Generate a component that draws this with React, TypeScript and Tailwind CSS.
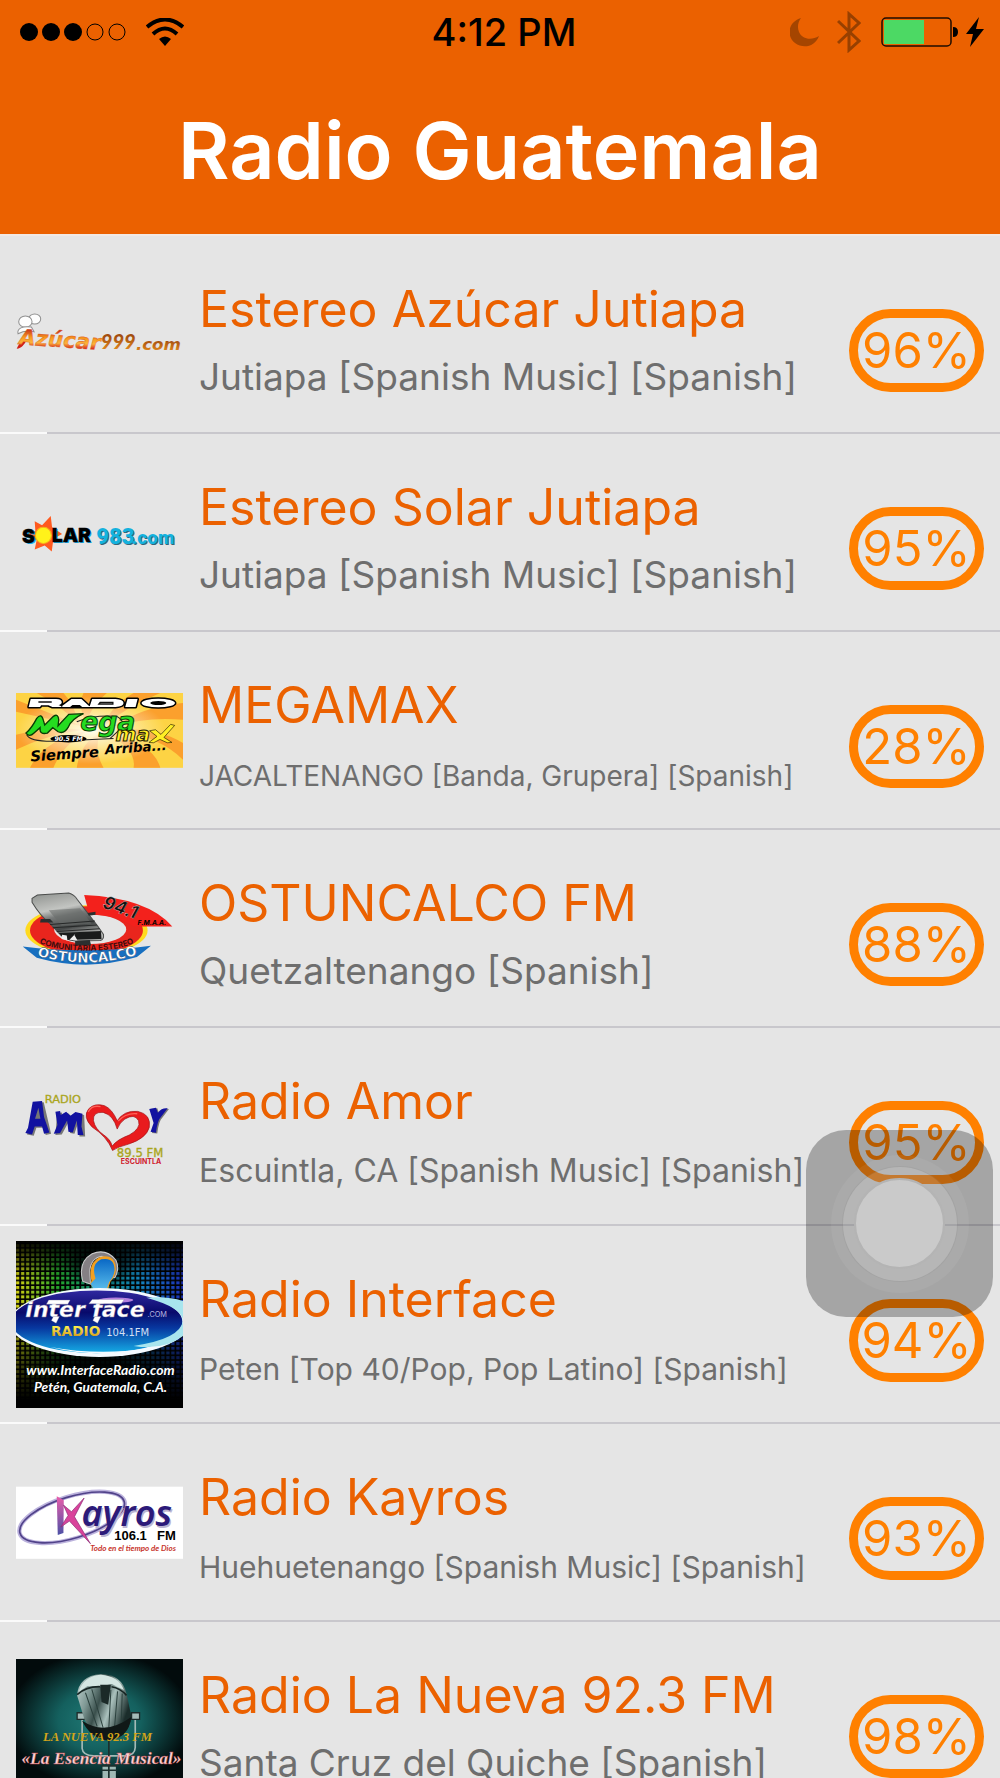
import type { ReactNode } from "react";

const Logo = ({ label, viewBox, children }: { label: string; viewBox: string; children: ReactNode }) => (
  <svg viewBox={viewBox} className="w-full h-auto block overflow-visible" role="img" aria-label={label}>
    {children}
  </svg>
);

const AzucarLogo = () => (
  <Logo label="Azúcar 999" viewBox="48 65 500 130">
    <defs>
      <linearGradient id="azucar" x1="0" x2="0.15" y1="0" y2="1">
        <stop offset="0.2" stopColor="#c9331c" />
        <stop offset="0.5" stopColor="#f79a1e" />
        <stop offset="0.7" stopColor="#fbb43c" />
        <stop offset="0.9" stopColor="#d8251c" />
      </linearGradient>
      <linearGradient id="azucarCom" x1="0" x2="0" y1="0" y2="1">
        <stop offset="0.3" stopColor="#a34e10" />
        <stop offset="1" stopColor="#f0951d" />
      </linearGradient>
    </defs>
    <g fill="#fdfdfd" stroke="#8f8f8f" strokeWidth="3">
      <ellipse cx="104" cy="86" rx="18" ry="15" />
      <ellipse cx="76" cy="94" rx="20" ry="17" />
      <path d="M54 130c-4-16 14-24 40-20l8 14c-20-4-34-2-48 6z" />
    </g>
    <path d="M50 175c4-10 12-20 18-30l10 8c-6 8-12 20-28 22z" fill="#cf2018" />
    <text
      x="56"
      y="162"
      fontFamily="'DejaVu Sans', sans-serif"
      fontStyle="italic"
      fontWeight="700"
      fontSize="64"
      fill="url(#azucar)"
      stroke="#d9541c"
      strokeWidth="1"
      transform="rotate(4 60 160)"
    >
      Azúcar
    </text>
    <g fontStyle="italic" fill="url(#azucarCom)">
      <text x="302" y="176" fontFamily="Lato, sans-serif" fontWeight="900" fontSize="60">999</text>
      <text x="407" y="178" fontFamily="'DejaVu Sans', sans-serif" fontWeight="700" fontSize="50">.com</text>
    </g>
  </Logo>
);

const SolarLogo = () => (
  <Logo label="Solar 983" viewBox="48 64 500 120">
    <path
      d="M152 76L156 110L186 130L160 144L155 182L134 164L104 176L110 148L66 132L106 122L104 92L126 104Z"
      fill="#ff5a1f"
    />
    <g fontFamily="Inter, sans-serif" fontWeight="900" fontSize="58">
      <text x="70" y="161" fill="#1bb4f0">S</text>
      <text x="158" y="157" fill="#1bb4f0">LAR</text>
      <text x="66" y="158" fill="#000" stroke="#000">S</text>
      <text x="155" y="153" fill="#000" stroke="#000">LAR</text>
    </g>
    <circle cx="130" cy="134" r="24" fill="#fff21a" stroke="#f6b21a" strokeWidth="3" />
    <g fontFamily="Roboto, sans-serif" fontWeight="900">
      <text x="291" y="164" fill="#37657a" fontSize="66">983</text>
      <text x="288" y="161" fill="#14b2de" fontSize="66">983</text>
      <text x="397" y="164" fill="#37657a" fontSize="57">.com</text>
      <text x="394" y="161" fill="#14b2de" fontSize="57">.com</text>
    </g>
  </Logo>
);

const MegamaxLogo = () => (
  <Logo label="Radio Megamax" viewBox="48 40 500 224">
    <defs>
      <radialGradient id="mega" cx="0.45" cy="0.5" r="0.45">
        <stop offset="0" stopColor="#fffdf0" />
        <stop offset="1" stopColor="#fffdf0" stopOpacity="0" />
      </radialGradient>
    </defs>
    <rect x="48" y="40" width="500" height="224" fill="#fdd344" />
    <g fill="#fba02d">
      <path d="M48 60L250 140L48 96ZM48 165Q150 140 250 150Q140 165 48 210ZM90 264Q130 180 270 150Q190 190 160 264ZM230 264Q240 190 300 160Q280 210 310 264Z" />
      <path d="M400 264Q410 210 320 160Q460 190 480 264ZM548 240Q480 170 340 150Q470 140 548 190ZM340 140Q440 110 548 120L548 70Q430 80 340 140ZM310 140Q330 80 400 40L480 40Q380 80 310 140ZM260 130Q230 80 250 40L320 40Q270 80 260 130ZM240 140Q200 90 110 40L190 40Q220 70 240 140Z" />
    </g>
    <rect x="48" y="40" width="500" height="224" fill="url(#mega)" />
    <g fill="#000" stroke="#000" strokeWidth="9" strokeLinejoin="round">
      <path d="M92 58h76q17 0 17 10q0 7-10 8l14 6h-32l-12-5h-22l-3 5H86z M182 82l32-24h30l26 24z M276 58h70q24 2 24 12t-24 12h-78z M382 58h30l-6 24h-31z" />
      <ellipse cx="474" cy="70" rx="50" ry="13" />
    </g>
    <g fill="#fff" fillRule="evenodd">
      <path d="M92 58h76q17 0 17 10q0 7-10 8l14 6h-32l-12-5h-22l-3 5H86z M182 82l32-24h30l26 24h-24l-7-6h-22l-7 6z M276 58h70q24 2 24 12t-24 12h-78z M382 58h30l-6 24h-31z" />
      <path d="M424 70a50 13 0 1 0 100 0a50 13 0 1 0-100 0zM450 70a24 6 0 1 1 48 0a24 6 0 1 1-48 0z" />
    </g>
    <path d="M115 67h40M300 68h38v5h-42z" stroke="#111" strokeWidth="4" fill="none" />
    <path d="M230 126Q280 105 350 110Q380 128 360 148L330 176M80 165Q90 188 180 184L340 176" stroke="#222" strokeWidth="3" fill="none" />
    <path
      d="M78 160Q96 144 110 116Q124 98 130 122L134 136L160 110Q174 100 176 120L174 138L206 104L250 102Q214 118 204 143Q192 164 174 156L158 144L142 160Q118 166 120 144L102 160Q88 174 78 160Z"
      fill="#25dc20" stroke="#073c05" strokeWidth="4"
    />
    <ellipse cx="205" cy="177" rx="54" ry="11" fill="#000" />
    <g fontFamily="'DejaVu Sans', sans-serif" fontStyle="italic" fontWeight="700">
      <text x="240" y="155" fontSize="80" fill="#25dc20" stroke="#073c05" strokeWidth="3">ega</text>
      <text x="163" y="184" fontSize="19" fill="#fff">90.5 FM</text>
      <text x="346" y="184" fontSize="60" fill="#ffef25" stroke="#252100" strokeWidth="3">ma</text>
      <path d="M448 153l18-3 16 14 29-30 12 3-32 36 24 15-14 1-22-10-19 10-14-1 24-18z" fill="#ffef25" stroke="#252100" strokeWidth="2" />
      <g transform="rotate(-4 95 245)" fill="#000">
        <text x="92" y="245" fontSize="44">Siempre</text>
        <text x="316" y="239" fontSize="40">Arriba...</text>
      </g>
    </g>
  </Logo>
);

const OstuncalcoLogo = () => (
  <Logo label="Ostuncalco 94.1" viewBox="48 34 500 220">
    <defs>
      <linearGradient id="micBody" x1="0" x2="0.3" y1="0" y2="1">
        <stop offset="0" stopColor="#8d908d" />
        <stop offset="0.4" stopColor="#c3c5c2" />
        <stop offset="0.55" stopColor="#777a79" />
        <stop offset="0.8" stopColor="#444747" />
        <stop offset="1" stopColor="#b4b6b4" />
      </linearGradient>
      <path id="ostuArc" d="M84 220Q260 278 438 216" />
      <path id="radioArc" d="M95 172Q130 212 260 213Q390 212 424 172" />
    </defs>
    <ellipse cx="259" cy="152" rx="183" ry="75" fill="#ffda1f" />
    <ellipse cx="259" cy="152" rx="169" ry="72" fill="#e9251d" />
    <ellipse cx="270" cy="149" rx="108" ry="44" fill="#e5e5e5" />
    <path d="M252 46Q440 54 516 140L400 140Q350 104 268 104Z" fill="#f3211c" />
    <path d="M68 200Q260 224 452 198L410 232Q260 276 110 234Z" fill="#176fc0" />
    <path d="M96 56L112 46L206 40Q222 44 232 60L292 138L310 164Q312 180 300 182L226 184Q190 180 176 160L150 132Q120 108 96 68Z" fill="url(#micBody)" stroke="#4a4c4b" strokeWidth="3" />
    <path d="M146 92L240 86L274 132L184 138Z" fill="#686b6a" opacity="0.55" />
    <path d="M150 134L284 124M158 144L290 136M170 155L298 147" stroke="#262828" strokeWidth="3" />
    <path d="M176 160L302 154L304 178L196 181Z" fill="#191b1b" />
    <path d="M186 165l-2 13 18 4-2-15zM226 162l-18 18 24 2-10-18z" fill="#eee" />
    <path d="M225 184l44-3 4 16h-48zM122 118l28 0 10 10h-40zM262 100l24-4v9l-20 3z" fill="#2c2f2f" />
    <g fontWeight="700">
      <text fontFamily="Inter, sans-serif" fontSize="24" fill="#3e0d0d" textAnchor="middle">
        <textPath href="#radioArc" startOffset="50%">COMUNITARIA ESTEREO</textPath>
      </text>
      <text fontFamily="'DejaVu Sans', sans-serif" fontSize="40" fill="#fff" stroke="#153052" strokeWidth="1" textAnchor="middle">
        <textPath href="#ostuArc" startOffset="50%">OSTUNCALCO</textPath>
      </text>
      <g transform="rotate(19 300 82)" fontFamily="Inter, sans-serif" fontStyle="italic" fill="#111" stroke="#ddd" strokeWidth="1">
        <text x="305" y="82" fontSize="54">94.1</text>
      </g>
      <text x="412" y="137" fontFamily="Inter, sans-serif" fontSize="20" fontStyle="italic">F.M.A.A.</text>
    </g>
  </Logo>
);

const AmorLogo = () => (
  <Logo label="Radio Amor" viewBox="48 53 500 230">
    <text x="134" y="97" fontFamily="'DejaVu Sans', sans-serif" fontSize="34" fill="#aaa51d" stroke="#aaa51d" strokeWidth="1">RADIO</text>
    <g fill="#777" transform="translate(5 4)">
      <path d="M76 188L98 94L126 92L148 186L132 190L126 168L104 168L96 192ZM161 190L166 124L180 122L182 134L198 124L211 136L226 125L247 130L250 194L233 194L230 150L218 186L205 184L201 150L180 188Z" />
    </g>
    <path fillRule="evenodd" d="M76 188L84 172L98 94L126 92L132 140L148 186L132 190L126 168L104 168L96 192ZM105 145L121 145L115 112ZM161 190L172 164L166 124L180 122L182 134L198 124L211 136L226 125L247 130L244 168L250 194L233 194L230 150L218 186L205 184L201 150L180 188Z" fill="#1212a0" />
    <path d="M455 188L464 160L451 116L471 114L477 130Q488 112 506 116L486 142Q476 150 471 189Z" fill="#777" />
    <path d="M451 184L460 158L447 116L467 112L473 127Q484 112 502 114L482 140Q472 148 467 187Z" fill="#1212a0" />
    <path fillRule="evenodd" d="M337 240Q320 198 276 170Q246 139 266 115Q284 97 313 106Q336 116 351 151Q372 119 413 123Q453 132 447 171Q438 204 385 221Q353 229 337 240ZM336 227Q351 207 387 194Q423 174 415 151Q403 128 374 146Q358 157 351 176Q340 134 309 126Q277 124 280 151Q285 176 310 193Q331 207 336 227Z" fill="#e91b1d" stroke="#a00e12" strokeWidth="2" />
    <path d="M264 125Q275 103 301 109M354 152Q376 127 411 130" stroke="#ff6258" strokeWidth="4" fill="none" />
    <text x="350" y="261" fontFamily="'DejaVu Sans', sans-serif" fontSize="35" fill="#aaa51d" stroke="#aaa51d" strokeWidth="1">89.5 FM</text>
    <text x="362" y="281" fontFamily="Inter, sans-serif" fontSize="21" fontWeight="700" fill="#d0202c">ESCUINTLA</text>
  </Logo>
);

const InterfaceLogo = () => (
  <Logo label="Interface Radio" viewBox="48 36 500 500">
    <defs>
      <linearGradient id="eqColors" x1="0" x2="1" y1="0" y2="0">
        <stop offset="0" stopColor="#e8e414" />
        <stop offset="0.25" stopColor="#28b630" />
        <stop offset="0.5" stopColor="#0b8f83" />
        <stop offset="0.75" stopColor="#158fd2" />
        <stop offset="1" stopColor="#1d35c9" />
      </linearGradient>
      <linearGradient id="eqFade" x1="0" x2="0" y1="0" y2="1">
        <stop offset="0" stopColor="#000" />
        <stop offset="0.22" stopColor="#000" stopOpacity="0.1" />
        <stop offset="0.4" stopColor="#000" stopOpacity="0.1" />
        <stop offset="0.7" stopColor="#000" stopOpacity="0.6" />
        <stop offset="0.95" stopColor="#000" />
      </linearGradient>
      <radialGradient id="eqCenter" cx="0.5" cy="0.5" r="0.5">
        <stop offset="0.3" stopColor="#000" stopOpacity="0.85" />
        <stop offset="1" stopColor="#000" stopOpacity="0" />
      </radialGradient>
      <pattern id="eqGrid" width="15" height="14" patternUnits="userSpaceOnUse">
        <path d="M0 0h15v14H0zM3 3v9h10V3z" fillRule="evenodd" fill="#000" />
      </pattern>
      <linearGradient id="oval" x1="0" x2="0" y1="0" y2="1">
        <stop offset="0" stopColor="#30289f" />
        <stop offset="0.35" stopColor="#080a6b" />
        <stop offset="0.6" stopColor="#0738a0" />
        <stop offset="1" stopColor="#15aee6" />
      </linearGradient>
      <linearGradient id="face" x1="0" x2="0" y1="0" y2="1">
        <stop offset="0" stopColor="#0968c5" />
        <stop offset="1" stopColor="#5fc3ee" />
      </linearGradient>
      <linearGradient id="gold" x1="0" x2="0" y1="0" y2="1">
        <stop offset="0.2" stopColor="#fff04e" />
        <stop offset="1" stopColor="#c98612" />
      </linearGradient>
      <clipPath id="interfaceClip"><rect x="48" y="36" width="500" height="500" /></clipPath>
    </defs>
    <g clipPath="url(#interfaceClip)">
      <rect x="48" y="36" width="500" height="500" fill="url(#eqColors)" />
      <rect x="48" y="36" width="500" height="500" fill="url(#eqGrid)" />
      <rect x="48" y="36" width="500" height="500" fill="url(#eqFade)" />
      <ellipse cx="298" cy="430" rx="260" ry="140" fill="url(#eqCenter)" />
      <ellipse cx="298" cy="95" rx="110" ry="80" fill="url(#eqCenter)" />
      <path d="M248 157Q232 99 276 74Q318 57 347 93Q359 119 344 146L329 142Q346 95 306 82Q272 87 269 126L271 165Z" fill="#858084" stroke="#ccc" strokeWidth="3" />
      <path d="M274 156Q262 101 299 84Q346 73 347 122Q345 144 331 157L322 184Q303 197 282 181L270 164Z" fill="#f2a020" />
      <path d="M286 148Q272 105 303 91Q344 83 343 125Q340 145 327 159L318 184Q302 195 281 181L271 164Z" fill="url(#face)" />
      <ellipse cx="298" cy="280" rx="268" ry="103" fill="#f4faff" />
      <ellipse cx="290" cy="278" rx="256" ry="94" fill="url(#oval)" />
      <path d="M438 206Q546 235 548 275Q540 330 400 350Q500 366 560 310V220Q510 200 438 206Z" fill="#a8e5ee" />
      <path d="M150 353Q300 390 440 357Q300 380 150 353Z" fill="#f4faff" />
      <ellipse cx="347" cy="213" rx="52" ry="8" fill="#db9cf4" opacity="0.8" />
      <g fontFamily="'DejaVu Sans', sans-serif" fontStyle="italic" fontWeight="700" fill="#fff" stroke="#86839e" strokeWidth="1">
        <text x="76" y="265" fontSize="66">inter</text>
        <text x="276" y="265" fontSize="66">face</text>
        <path d="M146 213h64l-7 12h-64zM276 211h96l-9 13h-97zM160 262l18 0-10 20-14-8zM284 262l18 0-10 20-14-8z" />
      </g>
      <text x="442" y="264" fontFamily="Inter, sans-serif" fontSize="22" fill="#b5b7e0">.COM</text>
      <text x="153" y="321" fontFamily="'DejaVu Sans', sans-serif" fontSize="41" fontWeight="700" fill="url(#gold)">RADIO</text>
      <text x="318" y="320" fontFamily="'DejaVu Sans', sans-serif" fontSize="30" fill="#d3e0f4">104.1FM</text>
      <g fontFamily="Lato, sans-serif" fontStyle="italic" fontWeight="700" fill="#fff">
        <text x="301" y="438" fontSize="42" textAnchor="middle">www.InterfaceRadio.com</text>
        <text x="301" y="488" fontSize="41" textAnchor="middle">Petén, Guatemala, C.A.</text>
      </g>
    </g>
  </Logo>
);

const KayrosLogo = () => (
  <Logo label="Kayros 106.1 FM" viewBox="48 48 500 216">
    <defs>
      <linearGradient id="kayrosK" x1="0" x2="0" y1="0" y2="1">
        <stop offset="0" stopColor="#e95daa" />
        <stop offset="1" stopColor="#4c51a6" />
      </linearGradient>
    </defs>
    <rect x="48" y="50" width="500" height="216" fill="#fff" />
    <g fill="none" transform="rotate(-17 216 142)">
      <ellipse cx="216" cy="142" rx="164" ry="63" stroke="#bcb3dd" strokeWidth="13" />
      <ellipse cx="216" cy="142" rx="163" ry="62" stroke="#51438a" strokeWidth="5" />
    </g>
    <g fontFamily="'Noto Sans', sans-serif" fontStyle="italic" fontWeight="600" fontSize="108">
      <text x="248" y="174" fill="#bbb4d1">ayros</text>
      <text x="244" y="169" fill="#2c1a79">ayros</text>
    </g>
    <path d="M170 79L191 91L190 189L173 195Z" fill="url(#kayrosK)" />
    <path d="M252 84L223 140L271 221L208 153L182 171L204 136L190 105L214 125Z" fill="#d9439b" stroke="#8b2a76" strokeWidth="2" />
    <g fontFamily="'Liberation Sans', sans-serif" fontWeight="700" fontSize="39" fill="#000">
      <text x="342" y="211">106.1</text>
      <text x="470" y="211">FM</text>
    </g>
    <text x="270" y="244" fontFamily="Lato, sans-serif" fontStyle="italic" fontWeight="700" fontSize="24" fill="#c8382f">Todo en el tiempo de Dios</text>
  </Logo>
);

const NuevaLogo = () => (
  <Logo label="La Nueva 92.3 FM" viewBox="48 57 500 366">
    <defs>
      <radialGradient id="teal" cx="0.5" cy="0.5" r="0.55">
        <stop offset="0" stopColor="#217c78" />
        <stop offset="0.45" stopColor="#14605e" />
        <stop offset="1" stopColor="#020b0c" />
      </radialGradient>
      <linearGradient id="chrome" x1="0" x2="1" y1="0" y2="0.4">
        <stop offset="0" stopColor="#c8dad8" />
        <stop offset="0.3" stopColor="#7f9894" />
        <stop offset="0.5" stopColor="#3a4f4c" />
        <stop offset="0.7" stopColor="#a9c0bc" />
        <stop offset="1" stopColor="#1b2d2b" />
      </linearGradient>
    </defs>
    <rect x="48" y="57" width="500" height="366" fill="url(#teal)" />
    <path d="M246 226V325Q248 346 280 347H375Q404 346 405 322V226" stroke="#a3bab7" strokeWidth="5" fill="none" />
    <path d="M231 218h24v20h-24zM394 218h24v20h-24z" fill="#a5bbb8" stroke="#1c2c2b" strokeWidth="4" />
    <path d="M307 377h40v46h-40z" fill="#9eb9b5" />
    <path d="M326 300v123M304 377h46M304 390h46" stroke="#1c302e" strokeWidth="5" />
    <path d="M231 166Q235 108 302 102Q366 104 379 161L394 231Q388 281 330 289Q273 288 252 235Z" fill="url(#chrome)" />
    <path d="M236 155Q250 108 302 104Q356 108 371 150L335 132L298 140L262 138Z" fill="#d4e6e2" />
    <path d="M300 134h32l-8 60-20-8z" fill="#1b2a28" />
    <path d="M231 164Q258 139 300 140M334 140Q360 144 379 166" stroke="#172624" strokeWidth="5" fill="none" />
    <path d="M256 158L291 259M275 148L309 263M332 150L326 262M352 154L343 263M366 160L363 253" stroke="#2b403d" strokeWidth="3" fill="none" />
    <path d="M246 242Q315 288 393 231Q386 296 323 301Q270 294 246 242Z" fill="#101817" />
    <text x="292" y="303" textAnchor="middle" fontFamily="'Liberation Serif', serif" fontStyle="italic" fontSize="38" fontWeight="700" fill="#d4a51a">LA NUEVA 92.3 FM</text>
    <text x="304" y="370" textAnchor="middle" fontFamily="'Liberation Serif', serif" fontStyle="italic" fontSize="52" fontWeight="700" fill="#f9d5d5" stroke="#c23b45" strokeWidth="1">«La Esencia Musical»</text>
  </Logo>
);

// size is the subtitle size, long subtitles shrink to stay on one line
const stations = [
  { name: "Estereo Azúcar Jutiapa", info: "Jutiapa [Spanish Music] [Spanish]", size: "text-[37px]", score: 96, logo: <AzucarLogo /> },
  { name: "Estereo Solar Jutiapa", info: "Jutiapa [Spanish Music] [Spanish]", size: "text-[37px]", score: 95, logo: <SolarLogo /> },
  { name: "MEGAMAX", info: "JACALTENANGO [Banda, Grupera] [Spanish]", size: "text-[28px]", score: 28, logo: <MegamaxLogo /> },
  { name: "OSTUNCALCO FM", info: "Quetzaltenango [Spanish]", size: "text-[37px]", score: 88, logo: <OstuncalcoLogo /> },
  { name: "Radio Amor", info: "Escuintla, CA [Spanish Music] [Spanish]", size: "text-[32px]", score: 95, logo: <AmorLogo /> },
  { name: "Radio Interface", info: "Peten [Top 40/Pop, Pop Latino] [Spanish]", size: "text-[30px]", score: 94, logo: <InterfaceLogo /> },
  { name: "Radio Kayros", info: "Huehuetenango [Spanish Music] [Spanish]", size: "text-[30px]", score: 93, logo: <KayrosLogo /> },
  { name: "Radio La Nueva 92.3 FM", info: "Santa Cruz del Quiche [Spanish]", size: "text-[37px]", score: 98, logo: <NuevaLogo /> },
];

function StatusBar() {
  return (
    <div className="grid grid-cols-[1fr_auto_1fr] items-center h-16 pl-5 pr-4 text-black">
      <div className="flex items-center">
        <svg viewBox="0 0 106 20" className="w-[106px] h-5" role="img" aria-label="Signal 3 of 5">
          <circle cx="9" cy="10" r="9" />
          <circle cx="31" cy="10" r="9" />
          <circle cx="53" cy="10" r="9" />
          <circle cx="75" cy="10" r="8" fill="none" stroke="#000" />
          <circle cx="97" cy="10" r="8" fill="none" stroke="#000" />
        </svg>
        <svg viewBox="0 0 38 28" className="w-[38px] h-7 ml-5" role="img" aria-label="Wi-Fi">
          <path d="M1 9Q19 -6 37 9" fill="none" stroke="#000" strokeWidth="4" />
          <path d="M7 16Q19 5 31 16" fill="none" stroke="#000" strokeWidth="4" />
          <path d="M13 21Q19 16 25 21L19 28Z" />
        </svg>
      </div>
      <span className="pl-1 text-[38px] leading-10 font-medium">4:12 PM</span>
      <div className="flex items-center justify-end">
        <svg viewBox="0 0 29 29" className="w-[29px] h-[29px]" role="img" aria-label="Do not disturb">
          <path d="M11 0C-2 4 -4 18 5 25C13 31 25 29 29 18C21 23 12 21 9 14C7 9 8 4 11 0Z" fill="#a54500" />
        </svg>
        <svg viewBox="0 0 24 42" className="w-6 h-[42px] ml-[18px]" role="img" aria-label="Bluetooth">
          <path d="M1 10L22 30L12 39V3L22 12L1 32" fill="none" stroke="#984000" strokeWidth="3" />
        </svg>
        <svg viewBox="0 0 78 30" className="w-[78px] h-[30px] ml-5" role="img" aria-label="Battery">
          <rect x="1" y="1" width="69" height="28" rx="4" fill="none" stroke="#1f0c00" strokeWidth="1.5" />
          <rect x="3" y="3" width="40" height="24" fill="#4cd964" />
          <path d="M72 10Q77 10 77 15T72 20Z" />
        </svg>
        <svg viewBox="0 0 18 30" className="w-[18px] h-[30px] ml-[7px]" role="img" aria-label="Charging">
          <path d="M13 0L0 17H7L4 30L18 12H10Z" />
        </svg>
      </div>
    </div>
  );
}

export default function App() {
  return (
    <div className="relative h-screen flex flex-col overflow-hidden bg-[#e5e5e5] font-[Inter,sans-serif]">
      <header className="shrink-0 bg-[#eb6100] border-b-2 border-[#f1e9e4]">
        <StatusBar />
        <h1 className="h-[170px] pt-9 text-center text-[79px] leading-[100px] font-semibold text-white whitespace-nowrap">
          Radio Guatemala
        </h1>
      </header>

      <main className="flex-1 min-h-0 overflow-hidden">
        <ul>
          {stations.map((station) => (
            <li key={station.name}>
              <a href="#" className="flex items-center h-[196px] px-4">
                <div className="w-[167px] shrink-0">{station.logo}</div>
                <div className="flex-1 min-w-0 ml-4 pt-4 whitespace-nowrap">
                  <h2 className="text-[50px] leading-[70px] text-[#eb6100]">{station.name}</h2>
                  <p className="text-[37px] leading-[66px] text-[#6e6e6e]">
                    <span className={`${station.size} leading-none`}>{station.info}</span>
                  </p>
                </div>
                <span className="shrink-0 w-[135px] h-[83px] mt-8 rounded-full border-[9px] border-[#ff8000] text-[49px] leading-[65px] text-[#ff8000] flex justify-center">
                  {station.score}%
                </span>
              </a>
              <div className="h-0.5 bg-[#c8c7cc]">
                <div className="h-full w-[47px] bg-[#fafafa]" />
              </div>
            </li>
          ))}
        </ul>
      </main>

      <button
        aria-label="AssistiveTouch"
        className="absolute top-[1130px] right-[7px] size-[187px] rounded-[40px] bg-black/28 flex items-center justify-center"
      >
        <span className="size-[138px] rounded-full bg-white/6 flex items-center justify-center">
          <span className="size-[116px] rounded-full bg-white/14 border border-black/10 flex items-center justify-center">
            <span className="size-[91px] rounded-full bg-[#cacaca] border-2 border-[#b4b4b4]" />
          </span>
        </span>
      </button>
    </div>
  );
}
